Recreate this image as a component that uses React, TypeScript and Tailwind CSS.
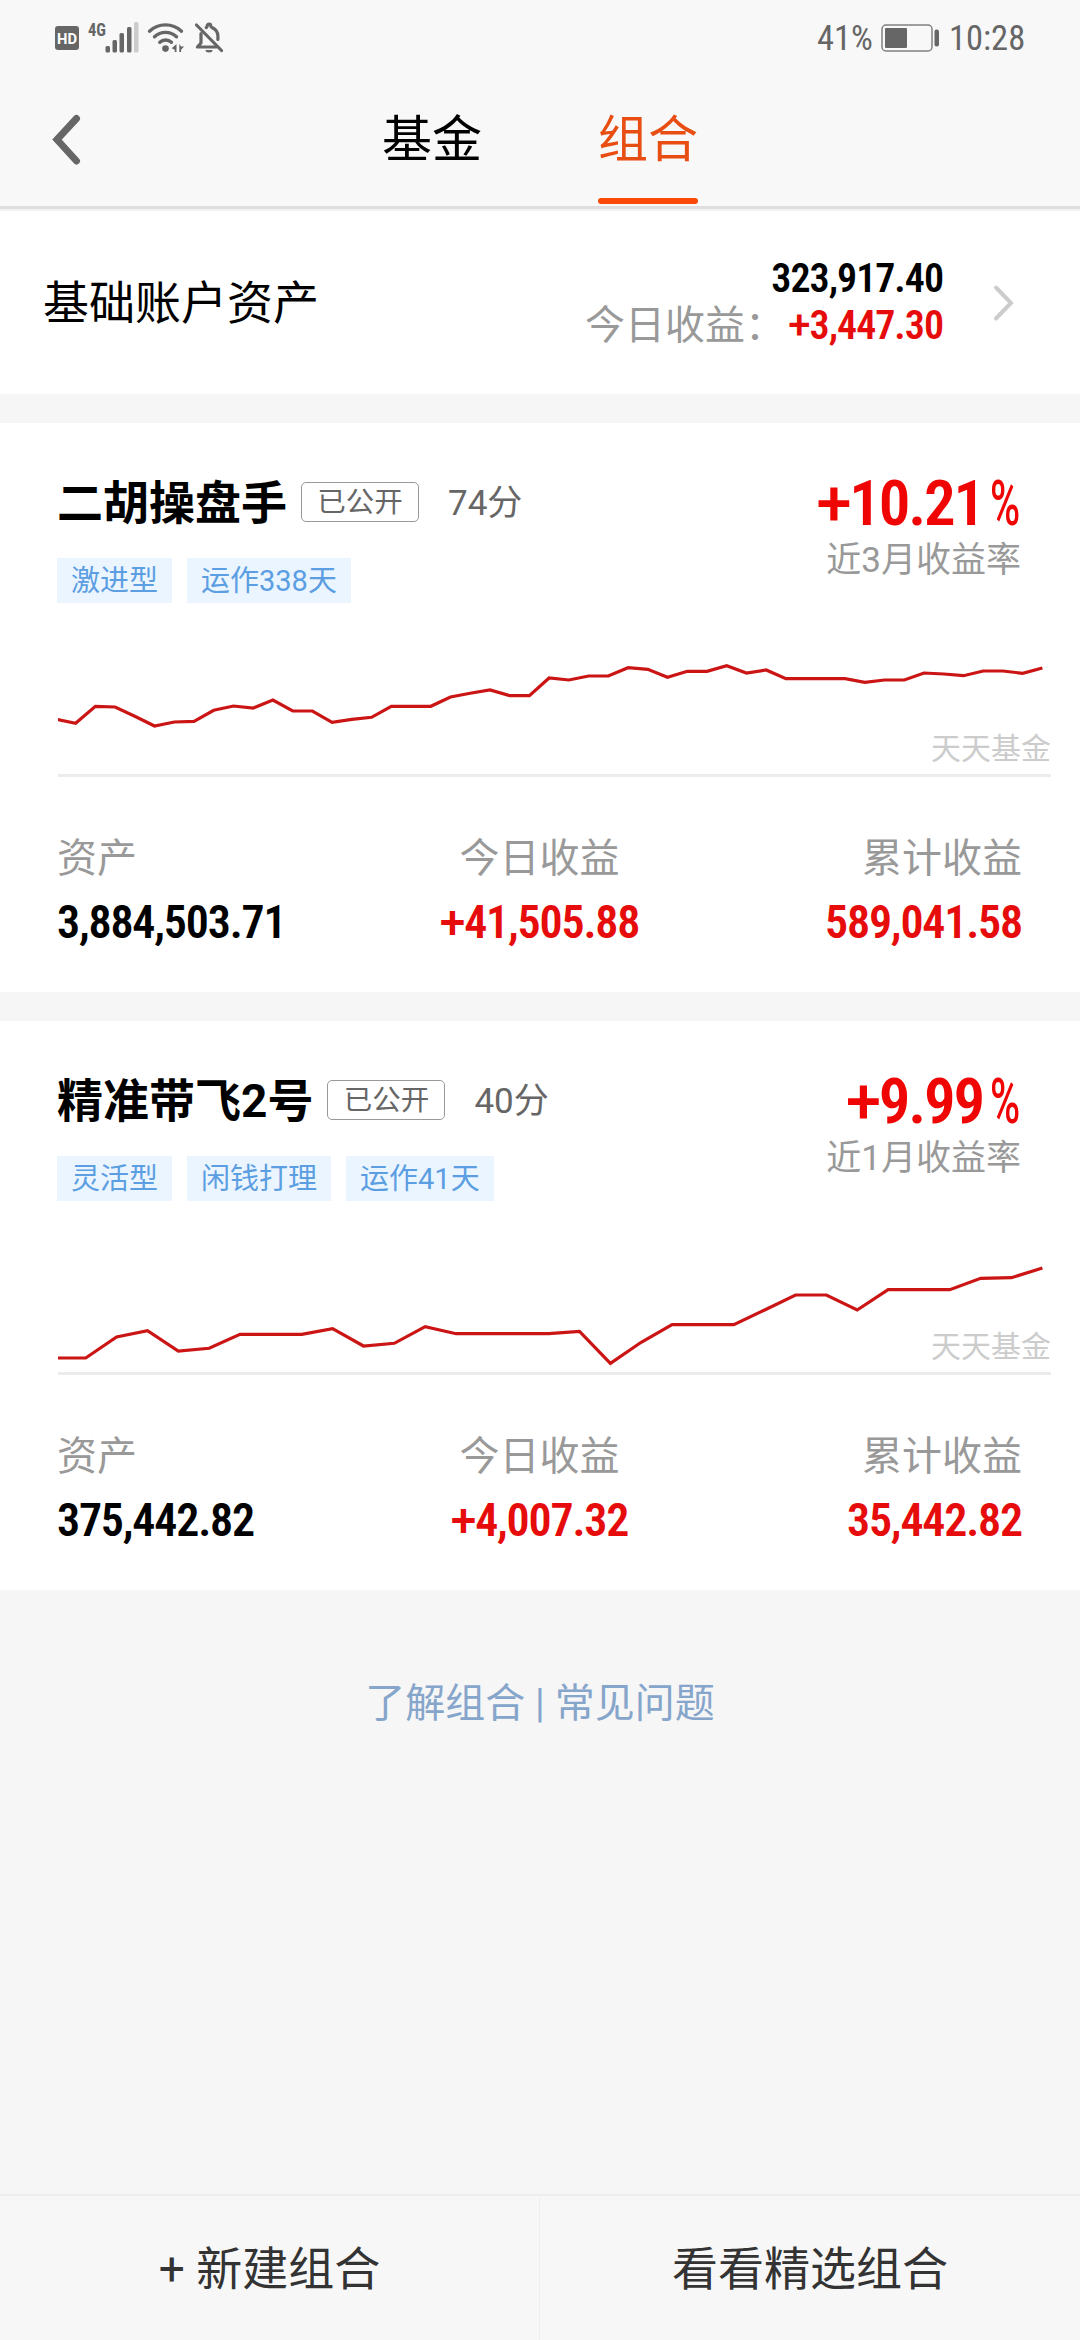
import clsx from 'clsx';

interface Portfolio {
  name: string;
  score: string;
  tags: string[];
  rate: string;
  period: string;
  step: number;
  trend: number[];
  asset: string;
  today: string;
  total: string;
}

const PORTFOLIOS: Portfolio[] = [
  {
    name: '二胡操盘手',
    score: '74分',
    tags: ['激进型', '运作338天'],
    rate: '+10.21',
    period: '近3月收益率',
    step: 19.73,
    trend: [
      79.3, 83.3, 66.3, 67, 76.3, 86, 82, 81.3, 70.3, 66, 68, 60, 71, 71, 82.3, 79.3, 77.3, 66.3, 66.3, 66.3, 57, 53.3,
      50, 55.7, 55.7, 38, 40, 36, 36, 27.7, 29.3, 37.3, 31.3, 31.3, 25.7, 33, 30, 38.7, 38.7, 38.7, 38.7, 42.3, 40, 40,
      33, 34, 35.7, 31, 31, 33.3, 28,
    ],
    asset: '3,884,503.71',
    today: '+41,505.88',
    total: '589,041.58',
  },
  {
    name: '精准带飞2号',
    score: '40分',
    tags: ['灵活型', '闲钱打理', '运作41天'],
    rate: '+9.99',
    period: '近1月收益率',
    step: 30.86,
    trend: [
      120, 120, 99, 92.7, 113, 110.3, 96.3, 96.3, 96.3, 90.7, 108, 105.3, 88.7, 95.7, 95.7, 95.7, 95.7, 93.3, 125.3,
      104.3, 86.7, 86.7, 86.7, 72, 57, 57, 72, 51.7, 51.7, 51.7, 40.3, 39.7, 30,
    ],
    asset: '375,442.82',
    today: '+4,007.32',
    total: '35,442.82',
  },
];

function StatusBar() {
  return (
    <div className="flex h-[76px] items-center justify-between pl-[55px] pr-[58px] text-[#666]">
      <svg width="170" height="52" viewBox="55 12 170 52" fill="none">
        <rect x="55" y="26" width="24" height="24" rx="3" fill="#666" />
        <text x="57" y="43.5" fontSize="15" fontWeight="700" fill="#fff" fontFamily="Roboto" textLength="20" lengthAdjust="spacingAndGlyphs">HD</text>
        <text x="88" y="36" fontSize="19" fontWeight="700" fill="#666" fontFamily="Roboto Condensed" textLength="18" lengthAdjust="spacingAndGlyphs">4G</text>
        <g fill="#666">
          <rect x="105.5" y="46" width="4.5" height="6.5" rx="1.5" />
          <rect x="112.5" y="40" width="4.5" height="12.5" rx="1.5" />
          <rect x="119.5" y="33" width="4.5" height="19.5" rx="1.5" />
          <rect x="127" y="27" width="4.5" height="25.5" rx="1.5" />
          <rect x="134" y="22" width="4.5" height="30.5" rx="1.5" fill="#ccc" />
        </g>
        <g stroke="#666" strokeWidth="3.4" strokeLinecap="round">
          <path d="M149.5 31.2a23.5 23.5 0 0 1 32 0" />
          <path d="M154.5 36.8a16 16 0 0 1 22 0" />
          <path d="M159.8 42.3a8.5 8.5 0 0 1 11.6 0" />
        </g>
        <circle cx="165.5" cy="48.6" r="3.3" fill="#666" />
        <path d="M176.5 44v8h-1.8v-2.3l-3-1.5zM179.3 44v8h1.8v-2.3l3-3.3h-3z" fill="#666" />
        <g stroke="#666" strokeWidth="3.2" strokeLinecap="round">
          <path d="M196.5 25l25 25.5" />
          <path d="M201 33.5v9.5l-3.6 4h19" strokeLinejoin="round" />
          <path d="M206.2 27.6c.6-.4 1-.7 1-1.6a1.8 1.8 0 0 1 3.6 0c0 1 .6 1.3 1.6 1.8 3.4 1.7 5.5 4.5 5.5 8.2v3.5" />
        </g>
        <path d="M205.5 50h7a3.5 2.5 0 0 1-7 0z" fill="#666" />
      </svg>
      <div className="flex items-center font-['Roboto_Condensed'] text-[34.5px] leading-none">
        <span className="w-[54px]">41%</span>
        <svg className="ml-[10px]" width="59" height="28" viewBox="0 0 59 28">
          <rect x="1" y="1" width="50" height="26" rx="4" fill="none" stroke="#808080" strokeWidth="1.5" />
          <rect x="4" y="4" width="22" height="20" rx="1" fill="#666" />
          <rect x="53.5" y="5.5" width="4.5" height="17" rx="2" fill="#666" />
        </svg>
        <span className="ml-[9px] w-[73px]">10:28</span>
      </div>
    </div>
  );
}

function Header() {
  return (
    <header className="h-[211px] bg-[#f8f8f8]">
      <StatusBar />
      <div className="grid h-[130px] grid-cols-[382px_316px_382px]">
        <svg className="ml-[52px] mt-[38px]" width="30" height="52" viewBox="0 0 30 52" fill="none">
          <path d="M24.5 4.5L5 25.5l19.5 21.5" stroke="#666" strokeWidth="7" strokeLinecap="round" />
        </svg>
        <nav className="flex justify-between text-[50px] leading-none">
          <span className="pt-[39px] text-black">基金</span>
          <span className="flex flex-col justify-between pt-[39px] text-[#e84d12]">
            组合
            <span className="mb-0.5 h-1.5 w-[100px] rounded-full bg-[#fb4a08]" />
          </span>
        </nav>
      </div>
      <div className="h-[3px] bg-[#dedede]" />
      <div className="h-0.5 bg-[#f2f2f2]" />
    </header>
  );
}

// Condensed digits; the leading sign is wider and lighter than the rest
function Amount({ value, className }: { value: string; className?: string }) {
  const signed = value.startsWith('+');
  return (
    <span className={clsx("font-['Roboto_Condensed'] font-semibold", className)}>
      {signed && <span className="font-[Roboto] font-medium">+</span>}
      {signed ? value.slice(1) : value}
    </span>
  );
}

function AccountRow() {
  return (
    <section className="flex h-[183px] items-center bg-white pl-[43px] pr-[65px]">
      <h2 className="flex-1 text-[46px] leading-none text-black">基础账户资产</h2>
      <div className="flex flex-col items-end gap-[7px] text-[40px] leading-10">
        <Amount value="323,917.40" className="tracking-[-1px] text-black" />
        <div className="flex">
          <span className="text-[#999]">今日收益：</span>
          <Amount value="+3,447.30" className="w-[158px] text-right tracking-[-1px] text-[#e60c0c]" />
        </div>
      </div>
      <svg className="ml-[49px]" width="23" height="38" viewBox="0 0 23 38" fill="none">
        <path d="M4 3.5L19 19 4 34.5" stroke="#ccc" strokeWidth="4" strokeLinecap="round" />
      </svg>
    </section>
  );
}

function TrendChart({ trend, step }: { trend: number[]; step: number }) {
  const last = trend.length - 1;
  const points = trend.map((y, i) => `${(984.4 - (last - i) * step).toFixed(1)},${y}`).join(' ');
  return (
    <div className="relative ml-[58px] h-[137px] w-[993px] border-b-[3px] border-[#ececec]">
      <svg width="993" height="134" fill="none">
        <polyline points={points} stroke="#cb1515" strokeWidth="3.2" />
      </svg>
      <span className="absolute bottom-[10px] right-0 text-[30px] leading-none text-[#ccc]">天天基金</span>
    </div>
  );
}

function Stat({ label, value, align }: { label: string; value: string; align: 'left' | 'center' | 'right' }) {
  return (
    <div
      className={clsx(
        'flex flex-col gap-5',
        align === 'left' && 'items-start',
        align === 'center' && 'items-center',
        align === 'right' && 'items-end'
      )}
    >
      <span className="text-[40px] leading-10 text-[#999]">{label}</span>
      <Amount
        value={value}
        className={clsx(
          'text-[46px] leading-[46px] tracking-[-1.2px]',
          align === 'left' ? 'text-black' : 'text-[#e60c0c]'
        )}
      />
    </div>
  );
}

function PortfolioCard({ item }: { item: Portfolio }) {
  return (
    <section className="h-[569px] bg-white">
      <div className="flex h-[217px] justify-between pl-[57px] pr-[59px]">
        <div className="pt-[57px]">
          <div className="flex h-[46px] items-center">
            <h3 className="text-[46px] font-bold leading-none text-black">{item.name}</h3>
            <span className="-mt-0.5 ml-3.5 flex h-10 w-[118px] items-center justify-center rounded-[5px] border border-[#999] pt-0.5 text-[28.5px] leading-none text-[#666]">
              已公开
            </span>
            <span className="ml-[29px] text-[35px] leading-none text-[#666]">{item.score}</span>
          </div>
          <div className="mt-8 flex gap-[15px]">
            {item.tags.map(tag => (
              <span key={tag} className="flex h-[45px] items-center bg-[#ebf5ff] px-3.5 pt-0.5 text-[29px] leading-none text-[#5c9ee2]">
                {tag}
              </span>
            ))}
          </div>
        </div>
        <div className="flex flex-col items-end pt-[49px]">
          <div className="flex text-[63px] leading-[63px] text-[#f00505]">
            <Amount value={item.rate} className="tracking-[-2.2px]" />
            <span className="ml-[7px] w-[31px]">
              <span className="inline-block origin-left scale-x-[0.65] font-medium">%</span>
            </span>
          </div>
          <span className="mt-2 text-[35px] leading-none text-[#999]">{item.period}</span>
        </div>
      </div>
      <TrendChart trend={item.trend} step={item.step} />
      <div className="grid grid-cols-3 pl-[57px] pr-[58px] pt-[62px]">
        <Stat label="资产" value={item.asset} align="left" />
        <Stat label="今日收益" value={item.today} align="center" />
        <Stat label="累计收益" value={item.total} align="right" />
      </div>
    </section>
  );
}

export default function App() {
  return (
    <div className="flex h-[2340px] w-[1080px] flex-col overflow-hidden bg-[#f6f6f6] font-[Roboto,'Noto_Sans_CJK_SC',sans-serif]" lang="zh-CN">
      <Header />
      <AccountRow />
      <main className="mt-[29px] flex flex-col gap-[29px]">
        {PORTFOLIOS.map(item => (
          <PortfolioCard key={item.name} item={item} />
        ))}
      </main>
      <p className="mt-[94px] text-center text-[40px] leading-10 text-[#86a5cb]">了解组合 | 常见问题</p>
      <footer className="mt-auto grid h-[146px] grid-cols-2 border-t-2 border-[#ededed] bg-[#f7f7f7] pt-px text-[46px] leading-none text-[#333]">
        <button className="border-r border-[#efefef]">+ 新建组合</button>
        <button>看看精选组合</button>
      </footer>
    </div>
  );
}
